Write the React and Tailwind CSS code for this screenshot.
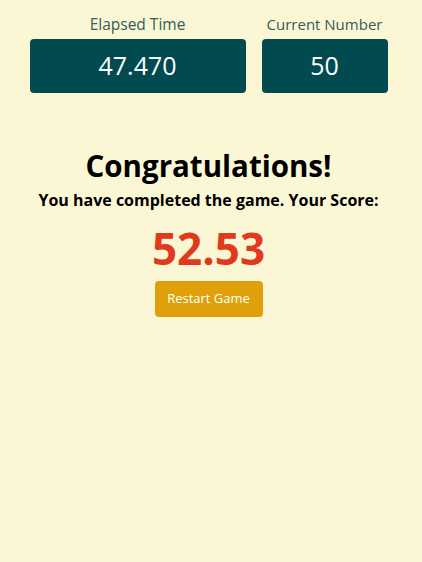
export default function App() {
  return (
    <div className="min-h-[562px] bg-[#fbf7d5] flex flex-col items-center pt-3 pr-[5px]" style={{ fontFamily: '"Open Sans", "Noto Sans", sans-serif' }}>
      <div className="flex gap-4">
        <div className="flex flex-col items-center w-[216px]">
          <span className="text-[15.5px] leading-6 text-[#335c5a]">Elapsed Time</span>
          <div className="mt-[3px] w-full h-[54px] rounded-[4px] bg-[#004a50] flex items-center justify-center text-white text-[25px]">
            47.470
          </div>
        </div>
        <div className="flex flex-col items-center w-[126px]">
          <span className="text-[15px] leading-6 text-[#335c5a]">Current Number</span>
          <div className="mt-[3px] w-full h-[54px] rounded-[4px] bg-[#004a50] flex items-center justify-center text-white text-[25px]">
            50
          </div>
        </div>
      </div>
      <h1 className="mt-[55px] text-[29.5px] leading-9 font-bold text-black">Congratulations!</h1>
      <p className="mt-[6px] text-[16px] leading-5 font-bold text-black">You have completed the game. Your Score:</p>
      <div className="mt-[12px] text-[44px] leading-[52px] font-bold text-[#e0391e]">52.53</div>
      <button className="mt-[7px] w-[108px] h-[36px] rounded-[4px] bg-[#e0a00a] text-white text-[13px]">Restart Game</button>
    </div>
  );
}
